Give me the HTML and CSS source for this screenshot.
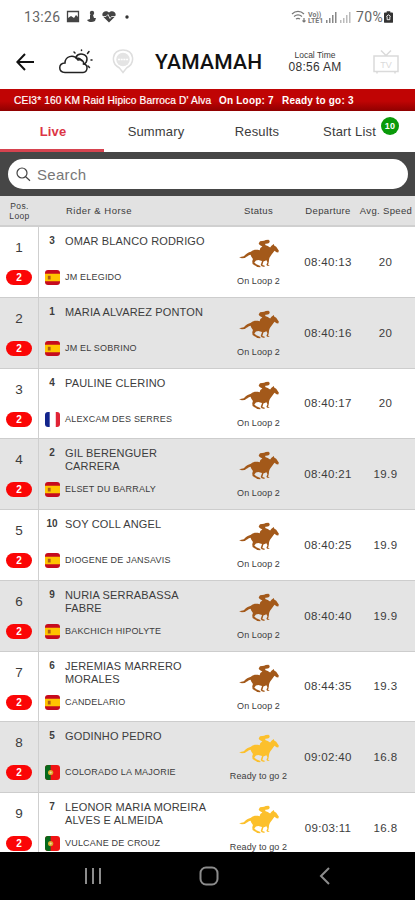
FILE: index.html
```
<!DOCTYPE html>
<html lang="en">
<head>
    <meta charset="UTF-8">
    <meta name="viewport" content="width=device-width, initial-scale=1.0">
    <title>Yamamah - Live</title>
    <link rel="stylesheet" href="styles.css">
</head>
<body>
    <!-- shared shapes -->
    <svg class="defs" width="0" height="0">
        <symbol id="horse" viewBox="0 0 124 86">
            <path d="M3 54 L17 51 C24 44 30 40 38 38 C46 30 55 32 64 33 L66 27 L72 22 L64 18 L61 13 L65 7 L77 5 L82 3 L90 2 L94 6 L92 12 L85 14 L82 13 L80 18 L88 21 L95 25 L99 20 L106 15 L107 19 L113 23 L121 35 L119 40 L114 39 L108 35 L104 40 C99 47 94 52 92 59 L91 68 L89 76 L94 80 L86 79 L84 76 L87 69 L84 63 L75 67 L72 77 L79 79 L78 83 L70 81 L67 77 L71 65 L60 62 L53 64 L48 70 L54 75 L66 80 L66 84 L57 83 L43 74 L42 66 L44 59 L39 52 L37 47 C30 48 25 54 20 56 L11 57 Z"/>
        </symbol>
        <symbol id="flag-es" viewBox="0 0 16 16">
            <path fill="#c60b1e" d="M0 0h16v16H0z"/>
            <path fill="#ffc400" d="M0 4h16v8H0z"/>
            <path fill="#ad5a12" d="M3 6h3v4H3z"/>
        </symbol>
        <symbol id="flag-fr" viewBox="0 0 16 16">
            <path fill="#fff" d="M0 0h16v16H0z"/>
            <path fill="#12248c" d="M0 0h5v16H0z"/>
            <path fill="#e02335" d="M11.5 0H16v16h-4.500z"/>
        </symbol>
        <symbol id="flag-pt" viewBox="0 0 16 16">
            <path fill="#f01414" d="M0 0h16v16H0z"/>
            <path fill="#08691a" d="M0 0h6v16H0z"/>
            <circle cx="6" cy="8" r="2.800" fill="#d9a92c"/>
            <circle cx="6" cy="8" r="1.200" fill="#f3d9a0"/>
        </symbol>
    </svg>

    <div class="statusbar">
        <span class="clock">13:26</span>
        <svg class="notif" width="64" height="14" viewBox="0 0 64 14">
            <path fill="none" stroke="#444" stroke-width="1.300" d="M1.500 1.500h11v10h-11z"/>
            <path fill="#444" d="M2 11V8l3-2 3 2 2-3 2 2v4z"/>
            <circle cx="26" cy="3" r="2.200" fill="#444"/>
            <path fill="#444" d="M24 5h3l1 3h2l-1 3c-3 2-7 1-8-1l3-1z"/>
            <path fill="#444" d="M43 12.500 37 6.500C34.500 3 39.500-1 43 2.500c3.500-3.500 8.500.5 6 4z"/>
            <path fill="none" stroke="#fff" stroke-width=".8" d="M36 6.500h4l2-2 2 4 1.500-2H51"/>
            <circle cx="61" cy="7" r="1.700" fill="#333"/>
        </svg>
        <svg class="signal" width="62" height="14" viewBox="0 0 62 14">
            <path fill="none" stroke="#777" stroke-width="1.200" d="M1 4c3.500-3.500 8.500-3.500 12 0M3 6.500c2.500-2 5.500-2 8 0M5 9c1.500-1 2.500-1 4 0M13 8v4M11.500 10.500l1.500 1.500 1.500-1.500"/>
            <text x="17" y="6.500" class="volte">Vo))</text>
            <text x="17" y="13" class="volte">LTE1</text>
            <path fill="#888" d="M35 10h1.500v3H35zM38 8h1.500v5H38zM41 5h1.500v8H41zM44 2h1.500v11H44z"/>
            <path fill="#bbb" d="M49 10h1.500v3H49zM52 8h1.500v5H52zM55 5h1.500v8H55zM58 2h1.500v11H58z"/>
        </svg>
        <span class="percent">70%</span>
        <svg width="9" height="12" viewBox="0 0 10 13">
            <path fill="#333" d="M3 0h4v1.500h2a1 1 0 0 1 1 1V12a1 1 0 0 1-1 1H1a1 1 0 0 1-1-1V2.500a1 1 0 0 1 1-1h2z"/>
            <path fill="none" stroke="#fff" d="M2.500 6 5 4l2.500 2M3.500 6v3.500h3V6"/>
        </svg>
    </div>

    <header class="topbar">
        <svg class="back" width="18" height="18" viewBox="0 0 18 18">
            <path fill="none" stroke="#111" stroke-width="2" d="M18 9H1.500M9 1 1.300 9 9 17"/>
        </svg>
        <svg class="weather" width="36" height="26" viewBox="0 0 36 26">
            <g fill="none" stroke="#222" stroke-width="1.500" stroke-linecap="round">
                <path d="M7 23.500c-7-.5-7-9 0-9.500 0-6 8-10 13-3 4-1 6 1 5.500 4 5 .5 4.500 8-.5 8.500z"/>
                <path d="M18 8c3-5 11-3 11 2 0 3-1 4-3 5M18 9c3 0 5 1 6 3"/>
                <path d="M23.500 1v.5M16 3l1 1M31 2.500l-1.500 2M33 11h1M30 17l1.500 1.500"/>
            </g>
        </svg>
        <svg class="pin" width="22" height="25" viewBox="0 0 22 25">
            <path fill="none" stroke="#dedede" stroke-width="1.500" d="M11 23.500 7.500 19C-2 14 0 1 11 1s13 13 3.500 18z"/>
            <circle cx="11" cy="10.500" r="6.800" fill="#e4e4e4"/>
            <path stroke="#fff" stroke-width="1.500" stroke-dasharray="2 .7" d="M6 10.500h10"/>
        </svg>
        <h1>YAMAMAH</h1>
        <div class="local">
            <span>Local Time</span>
            <b>08:56 AM</b>
        </div>
        <svg class="tv" width="26" height="24" viewBox="0 0 26 24">
            <path fill="none" stroke="#dadada" stroke-width="1.500" d="M1 6h24v15.500H1zM8 .500l5 5 5-5M4 22v1.500M22 22v1.500"/>
            <text x="13" y="17.500" text-anchor="middle">TV</text>
        </svg>
    </header>

    <div class="event">
        <span class="event-name">CEI3* 160 KM Raid Hipico Barroca D' Alva</span>
        <span class="event-loop">On Loop: 7</span>
        <span class="event-ready">Ready to go: 3</span>
    </div>

    <nav class="tabs">
        <a class="active">Live</a>
        <a>Summary</a>
        <a>Results</a>
        <a>Start List<i class="count">10</i></a>
    </nav>

    <div class="search">
        <div class="field">
            <svg width="15" height="15" viewBox="0 0 15 15">
                <path fill="none" stroke="#444" stroke-width="1.200" d="M11 6a5 5 0 1 1-10 0 5 5 0 0 1 10 0zM9.700 9.700l4.300 4"/>
            </svg>
            <span>Search</span>
        </div>
    </div>

    <div class="row head">
        <span class="h-pos">Pos.<br>Loop</span>
        <span class="h-rider">Rider &amp; Horse</span>
        <span>Status</span>
        <span>Departure</span>
        <span class="h-speed">Avg. Speed</span>
    </div>

    <main class="list" id="list"></main>

    <div class="navbar">
        <svg width="18" height="18" viewBox="0 0 18 18"><path stroke="#8c8c8c" stroke-width="2" d="M2 1v16M9 1v16M16 1v16"/></svg>
        <svg width="20" height="20" viewBox="0 0 20 20"><rect x="1.500" y="1.500" width="17" height="17" rx="5.500" fill="none" stroke="#8c8c8c" stroke-width="2"/></svg>
        <svg width="18" height="18" viewBox="0 0 18 18"><path fill="none" stroke="#8c8c8c" stroke-width="2" d="M13 1 5 9l8 8"/></svg>
    </div>

    <script src="list.js"></script>
</body>
</html>
```
FILE: styles.css
```
*{
    box-sizing: border-box;
}
html,body{
    height: 100%;
}
body{
    margin: 0;
    display: flex;
    flex-direction: column;
    overflow: hidden;
    background: #fff;
    color: #3c3c3c;
    font-family: "Liberation Sans", Arial, sans-serif;
}
.defs{
    position: absolute;
}

/* status bar */
.statusbar{
    flex: none;
    height: 34px;
    padding: 0 22px 0 24px;
    display: flex;
    align-items: center;
    font-family: Roboto, sans-serif;
    font-size: 14px;
    color: #666;
}
.clock{
    width: 42px;
    letter-spacing: 0.3px;
}
.signal{
    margin-left: auto;
}
.volte{
    font-size: 7px;
    font-weight: bold;
    fill: #777;
}
.percent{
    margin: 0 1px 0 3px;
    letter-spacing: 0.3px;
}

/* top bar */
.topbar{
    flex: none;
    height: 55px;
    padding: 0 16px;
    display: flex;
    align-items: center;
}
.weather{
    margin-left: 24px;
}
.pin{
    margin-left: 18px;
}
h1{
    margin: 0 0 0 21px;
    width: 111px;
    font: 500 21px Roboto, sans-serif;
    letter-spacing: 0.3px;
    color: #111;
}
.local{
    width: 64px;
    margin-left: 17px;
    display: flex;
    flex-direction: column;
    align-items: center;
    white-space: nowrap;
}
.local span{
    font-size: 8.5px;
    line-height: 10px;
}
.local b{
    font-size: 12px;
    line-height: 14px;
    font-weight: normal;
    letter-spacing: 0.3px;
    color: #333;
}
.tv{
    margin-left: auto;
}
.tv text{
    font-size: 9px;
    fill: #dadada;
}

.event{
    flex: none;
    height: 22px;
    padding-left: 14px;
    display: flex;
    align-items: center;
    white-space: nowrap;
    background: linear-gradient(#c00404, #c00404 55%, #8f0000);
    color: #fff;
    font-size: 10px;
}
.event-name{
    width: 205px;
    font-size: 10.2px;
    letter-spacing: 0.13px;
    -webkit-text-stroke: 0.2px #fff;
}
.event-loop,.event-ready{
    font-weight: bold;
    letter-spacing: 0.2px;
}
.event-loop{
    width: 63px;
}

/* tabs */
.tabs{
    flex: none;
    height: 41px;
    display: grid;
    grid-template-columns: 104px 104px 98px 109px;
}
.tabs a{
    position: relative;
    padding-top: 13px;
    text-align: center;
    font-size: 13px;
    line-height: 16px;
    letter-spacing: 0.15px;
}
.tabs .active{
    padding-left: 2px;
    font-weight: bold;
    color: #dc3545;
    border-bottom: 3px solid #d6434f;
}
.tabs a:last-child{
    padding-right: 22px;
}
.count{
    position: absolute;
    top: 6px;
    right: 16px;
    width: 18px;
    height: 18px;
    border-radius: 50%;
    background: #0a9a0a;
    color: #fff;
    font: bold 9px/18px "Liberation Sans", Arial, sans-serif;
}

.search{
    flex: none;
    height: 44px;
    padding: 7px 7px 7px 8px;
    background: #464646;
}
.field{
    height: 30px;
    border-radius: 15px;
    padding-left: 8px;
    display: flex;
    align-items: center;
    gap: 6px;
    background: #fff;
    color: #777;
    font-size: 15px;
    letter-spacing: 0.3px;
}

/* table */
.row{
    display: grid;
    grid-template-columns: 39px 176px 87px 52px 61px;
    text-align: center;
    white-space: nowrap;
}
.head{
    flex: none;
    height: 31px;
    align-items: center;
    background: #e2e2e2;
    border-bottom: 2px solid #d0d0d0;
    font-size: 9.5px;
    line-height: 11px;
    letter-spacing: 0.35px;
}
.head .h-pos{
    font-size: 8.5px;
    line-height: 10px;
}
.head .h-rider{
    text-align: left;
    padding-left: 27px;
    letter-spacing: 0.5px;
}
.head .h-speed{
    padding-left: 3px;
}
.list{
    flex: 1;
    min-height: 0;
    overflow: hidden;
}
.list .row{
    height: 70.75px;
    border-bottom: 1.5px solid #cdcdcd;
}
.list .row:nth-child(even){
    background: #e4e4e4;
}
.pos{
    border-right: 1px solid #cfcfcf;
    display: flex;
    flex-direction: column;
    align-items: center;
    padding-top: 13px;
    font-size: 13.5px;
    line-height: 16px;
}
.pos b{
    margin-top: 14px;
    width: 26px;
    height: 15px;
    border-radius: 8px;
    background: #fb0606;
    color: #fff;
    font-size: 10px;
    line-height: 15px;
}
.rider{
    display: grid;
    grid-template-columns: 26px 150px;
    grid-template-rows: 35px 15px;
    padding-top: 8px;
    text-align: left;
}
.num{
    padding-left: 5px;
    width: 21px;
    text-align: center;
    font-size: 10px;
    line-height: 12px;
    font-weight: bold;
}
.name{
    font-size: 11px;
    line-height: 13px;
    letter-spacing: 0.15px;
}
.flag{
    margin-left: 6px;
    width: 15px;
    height: 15px;
    border-radius: 3px;
    align-self: center;
}
.mount{
    font-size: 9px;
    line-height: 14px;
    letter-spacing: 0.2px;
}
.status{
    display: flex;
    flex-direction: column;
    align-items: center;
    padding-top: 12px;
    font-size: 9px;
    line-height: 11px;
    letter-spacing: 0.1px;
}
.status svg{
    width: 42px;
    height: 29px;
    margin: 0 0 8px 1px;
    fill: #a3591a;
}
.status.ready svg{
    fill: #fcc02c;
}
.time,.speed{
    align-self: center;
    font-size: 11.5px;
    letter-spacing: 0.35px;
}
.time{
    margin: 0 -5px;
}
.speed{
    padding-left: 2px;
}

.navbar{
    flex: none;
    height: 48px;
    padding: 0 81px 0 84px;
    background: #000;
    display: flex;
    align-items: center;
    justify-content: space-between;
}
```
FILE: list.js
```
var riders = [
    ["3", "OMAR BLANCO RODRIGO", "es", "JM ELEGIDO", "08:40:13", "20"],
    ["1", "MARIA ALVAREZ PONTON", "es", "JM EL SOBRINO", "08:40:16", "20"],
    ["4", "PAULINE CLERINO", "fr", "ALEXCAM DES SERRES", "08:40:17", "20"],
    ["2", "GIL BERENGUER<br>CARRERA", "es", "ELSET DU BARRALY", "08:40:21", "19.9"],
    ["10", "SOY COLL ANGEL", "es", "DIOGENE DE JANSAVIS", "08:40:25", "19.9"],
    ["9", "NURIA SERRABASSA<br>FABRE", "es", "BAKCHICH HIPOLYTE", "08:40:40", "19.9"],
    ["6", "JEREMIAS MARRERO<br>MORALES", "es", "CANDELARIO", "08:44:35", "19.3"],
    ["5", "GODINHO PEDRO", "pt", "COLORADO LA MAJORIE", "09:02:40", "16.8"],
    ["7", "LEONOR MARIA MOREIRA<br>ALVES E ALMEIDA", "pt", "VULCANE DE CROUZ", "09:03:11", "16.8"]
];
var html = "";
for(var i = 0; i < riders.length; i++){
    var r = riders[i];
    // the last two have not started the loop yet
    var ready = i > 6;
    html += '<div class="row">' +
        '<div class="pos">' + (i + 1) + '<b>2</b></div>' +
        '<div class="rider">' +
            '<span class="num">' + r[0] + '</span><span class="name">' + r[1] + '</span>' +
            '<svg class="flag"><use href="#flag-' + r[2] + '"/></svg><span class="mount">' + r[3] + '</span>' +
        '</div>' +
        '<div class="status' + (ready ? ' ready' : '') + '"><svg><use href="#horse"/></svg>' + (ready ? 'Ready to go 2' : 'On Loop 2') + '</div>' +
        '<span class="time">' + r[4] + '</span>' +
        '<span class="speed">' + r[5] + '</span>' +
    '</div>';
}
document.getElementById("list").innerHTML = html;
```
